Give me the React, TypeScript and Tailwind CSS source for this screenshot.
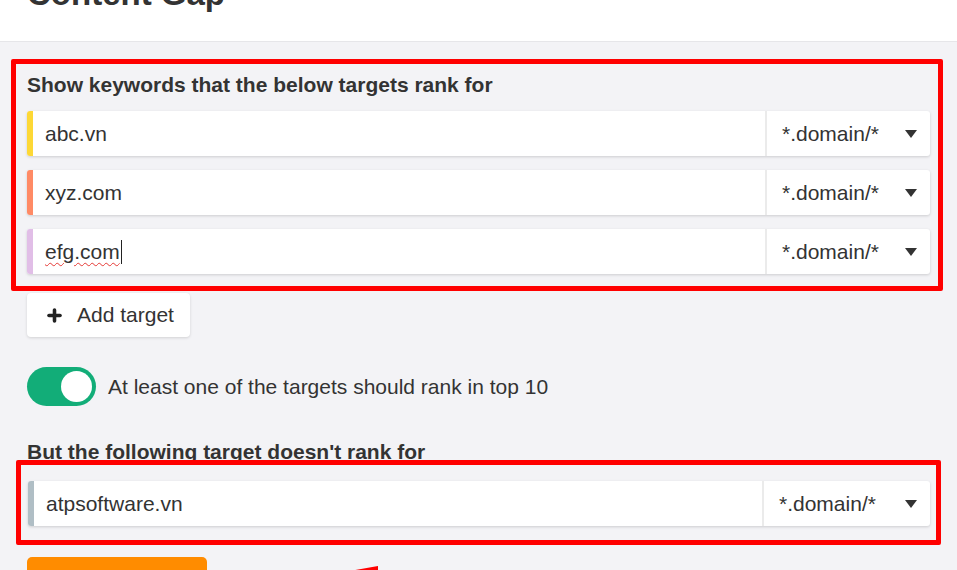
import { Plus } from "lucide-react";

const targets = [
  { domain: "abc.vn", color: "bg-[#fdd835]" },
  { domain: "xyz.com", color: "bg-[#ff8a65]" },
  { domain: "efg.com", color: "bg-[#e1bee7]", editing: true },
];

function Caret() {
  return (
    <svg width="12" height="8" viewBox="0 0 12 8" className="shrink-0">
      <path d="M0 0 L12 0 L6 8 Z" fill="#333" />
    </svg>
  );
}

function TargetRow({
  domain,
  color,
  editing,
  selectWidth = "w-[163px]",
}: {
  domain: string;
  color: string;
  editing?: boolean;
  selectWidth?: string;
}) {
  return (
    <div className="flex h-[45px] rounded-[3px] bg-white shadow-[0_1px_3px_rgba(0,0,0,0.16)] overflow-hidden">
      <div className={`w-[6px] shrink-0 ${color}`} />
      <div className="flex flex-1 items-center pl-[12px] text-[21px] text-[#333]">
        {editing ? (
          <>
            <span className="underline decoration-wavy decoration-[#e53935] decoration-1 underline-offset-[3px]">
              {domain}
            </span>
            <span className="ml-[1px] h-[24px] w-[1px] bg-[#222]" />
          </>
        ) : (
          domain
        )}
      </div>
      <div className="w-[2px] bg-[#ebebeb]" />
      <div
        className={`flex ${selectWidth} items-center justify-between pl-[15px] pr-[13px] text-[21px] text-[#333]`}
      >
        <span>*.domain/*</span>
        <Caret />
      </div>
    </div>
  );
}

export default function App() {
  return (
    <div
      className="relative h-[570px] w-[957px] overflow-hidden bg-[#f3f3f6]"
      style={{ fontFamily: '"Liberation Sans", Arial, sans-serif' }}
    >
      <header className="h-[42px] overflow-hidden border-b border-[#e6e6e9] bg-white">
        <h1 className="-mt-[26px] pl-[27px] text-[33px] font-bold leading-[40px] text-[#333]">
          Content Gap
        </h1>
      </header>

      <main className="flex flex-col px-[27px] pt-[31px]">
        <h2 className="text-[21px] font-bold leading-[24px] text-[#333]">
          Show keywords that the below targets rank for
        </h2>
        <div className="mt-[14px] flex flex-col gap-[14px]">
          {targets.map((t) => (
            <TargetRow key={t.domain} {...t} />
          ))}
        </div>

        <button className="mt-[19px] flex h-[44px] w-[163px] items-center gap-[13px] rounded-[4px] bg-white pl-[18px] text-[21px] text-[#333] shadow-[0_1px_3px_rgba(0,0,0,0.14)]">
          <Plus size={19} strokeWidth={4.5} className="text-[#222]" />
          Add target
        </button>

        <div className="mt-[30px] flex items-center gap-[12px]">
          <div className="flex h-[39px] w-[69px] items-center justify-end rounded-full bg-[#12ad78] pr-[4px]">
            <div className="h-[31px] w-[31px] rounded-full bg-white" />
          </div>
          <span className="text-[21px] text-[#333]">
            At least one of the targets should rank in top 10
          </span>
        </div>

        <h2 className="mt-[34px] text-[21px] font-bold leading-[24px] text-[#333]">
          But the following target doesn't rank for
        </h2>
        <div className="mt-[17px] pl-[1px]">
          <TargetRow
            domain="atpsoftware.vn"
            color="bg-[#b0bec5]"
            selectWidth="w-[166px]"
          />
        </div>

        <div className="mt-[31px] h-[40px] w-[180px] rounded-[5px] bg-[#ff8c00]" />
      </main>

      {/* annotation boxes */}
      <div className="pointer-events-none absolute left-[11px] top-[59px] h-[232px] w-[932px] rounded-[2px] border-[5px] border-[#ff0000]" />
      <div className="pointer-events-none absolute left-[16px] top-[460px] h-[85px] w-[925px] rounded-[2px] border-[5px] border-[#ff0000]" />
      <svg
        className="pointer-events-none absolute left-[340px] top-[562px]"
        width="45"
        height="10"
        viewBox="0 0 45 10"
      >
        <path d="M4 10 L38 4 L38 8 Z" fill="#ff0000" />
      </svg>
    </div>
  );
}
